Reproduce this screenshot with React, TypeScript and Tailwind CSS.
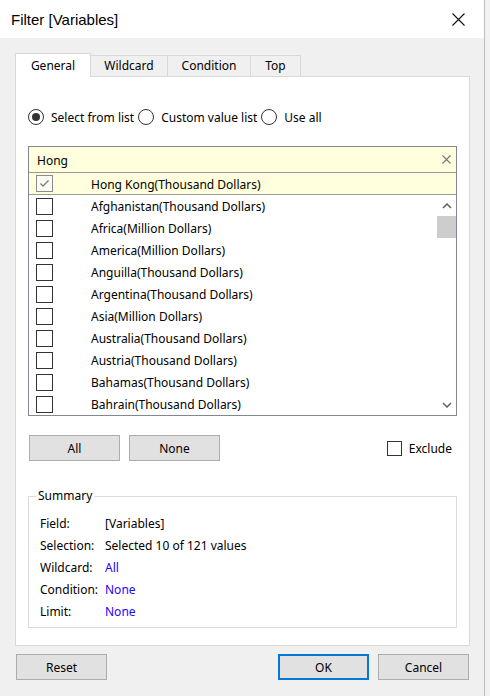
import React from "react";

const FONT = { fontFamily: '"Noto Sans", "Liberation Sans", Arial, sans-serif' };
const TITLE_FONT = { fontFamily: '"Liberation Sans", Arial, sans-serif' };

const items = [
  "Afghanistan(Thousand Dollars)",
  "Africa(Million Dollars)",
  "America(Million Dollars)",
  "Anguilla(Thousand Dollars)",
  "Argentina(Thousand Dollars)",
  "Asia(Million Dollars)",
  "Australia(Thousand Dollars)",
  "Austria(Thousand Dollars)",
  "Bahamas(Thousand Dollars)",
  "Bahrain(Thousand Dollars)",
];

function Radio({ checked, label }: { checked?: boolean; label: string }) {
  return (
    <div className="flex items-center">
      <div className="w-[16px] h-[16px] rounded-full border border-[#333] bg-white flex items-center justify-center">
        {checked && <div className="w-[8px] h-[8px] rounded-full bg-[#333]" />}
      </div>
      <span className="ml-[7px] pt-[2px]">{label}</span>
    </div>
  );
}

function Btn({ label, primary, className = "" }: { label: string; primary?: boolean; className?: string }) {
  return (
    <div
      className={
        "h-[26px] w-[91px] flex items-center justify-center bg-[#e1e1e1] text-black " +
        (primary ? "border-2 border-[#0078d7] " : "border border-[#adadad] ") +
        className
      }
    >
      <span className="pt-[2px]">{label}</span>
    </div>
  );
}

function Tab({ label, active, w }: { label: string; active?: boolean; w: string }) {
  return (
    <div
      className={
        "flex items-center justify-center border border-b-0 border-[#d9d9d9] " +
        w +
        (active ? " h-[24px] bg-white relative z-10 -mb-px" : " h-[21px] bg-[#f0f0f0] -ml-px")
      }
    >
      {label}
    </div>
  );
}

export default function App() {
  return (
    <div className="w-[490px] h-[696px] flex bg-[#f0f0f0] text-[12px] leading-[16px] text-black overflow-hidden" style={FONT}>
      <div className="w-[485px] h-[696px] flex flex-col bg-[#f0f0f0] border-r border-[#bcbcbc]">
        {/* Title bar */}
        <div className="h-[38px] bg-white flex items-center justify-between pl-[11px] pr-[19px] shrink-0">
          <span className="text-[15px] leading-none" style={TITLE_FONT}>Filter [Variables]</span>
          <svg width="13" height="13" viewBox="0 0 13 13">
            <path d="M0.5 0.5 L12.5 12.5 M12.5 0.5 L0.5 12.5" stroke="#111" strokeWidth="1.1" />
          </svg>
        </div>

        <div className="flex flex-col px-[15px] pt-[14px]">
          {/* Tabs */}
          <div className="flex items-end h-[24px]">
            <Tab label="General" active w="w-[76px]" />
            <Tab label="Wildcard" w="w-[78px]" />
            <Tab label="Condition" w="w-[84px]" />
            <Tab label="Top" w="w-[51px]" />
          </div>

          {/* Panel */}
          <div className="w-[455px] h-[570px] bg-white border border-[#d9d9d9] pl-[12px] flex flex-col">
            <div className="flex items-center gap-[4px] mt-[31px] h-[17px]">
              <Radio checked label="Select from list" />
              <Radio label="Custom value list" />
              <Radio label="Use all" />
            </div>

            {/* list box */}
            <div className="mt-[21px] w-[429px] border border-[#828790] flex flex-col">
              <div className="h-[26px] bg-[#ffffdd] flex items-center justify-between pl-[8px] pr-[5px] border-b border-[#9a9a9a]">
                <span className="pt-[2px]">Hong</span>
                <svg width="9" height="9" viewBox="0 0 9 9">
                  <path d="M0.5 0.5 L8.5 8.5 M8.5 0.5 L0.5 8.5" stroke="#777" strokeWidth="1.1" />
                </svg>
              </div>
              <div className="h-[22px] bg-[#ffffdd] flex items-center pl-[7px] border-b border-[#9a9a9a]">
                <div className="w-[17px] h-[17px] border border-[#8c8c8c] bg-[#fbfbf4] flex items-center justify-center">
                  <svg width="11" height="9" viewBox="0 0 11 9">
                    <path d="M1.5 4.5 L4 7 L9.5 1.5" fill="none" stroke="#7a7a7a" strokeWidth="1.3" />
                  </svg>
                </div>
                <span className="ml-[38px] pt-[2px]">Hong Kong(Thousand Dollars)</span>
              </div>
              <div className="h-[220px] flex">
                <div className="flex-1 flex flex-col">
                  {items.map((it) => (
                    <div key={it} className="h-[22px] flex items-center pl-[7px]">
                      <div className="w-[17px] h-[17px] border border-[#333] bg-white" />
                      <span className="ml-[38px] pt-[2px]">{it}</span>
                    </div>
                  ))}
                </div>
                <div className="w-[19px] flex flex-col items-center bg-white">
                  <div className="h-[21px] flex items-center justify-center">
                    <svg width="10" height="6" viewBox="0 0 10 6">
                      <path d="M1 5 L5 1 L9 5" fill="none" stroke="#606060" strokeWidth="1.5" />
                    </svg>
                  </div>
                  <div className="w-[19px] h-[22px] bg-[#cdcdcd]" />
                  <div className="flex-1" />
                  <div className="h-[21px] flex items-center justify-center">
                    <svg width="10" height="6" viewBox="0 0 10 6">
                      <path d="M1 1 L5 5 L9 1" fill="none" stroke="#606060" strokeWidth="1.5" />
                    </svg>
                  </div>
                </div>
              </div>
            </div>

            {/* All/None + Exclude */}
            <div className="mt-[19px] flex items-center h-[26px] pl-[1px] pr-[17px]">
              <Btn label="All" />
              <Btn label="None" className="ml-[9px]" />
              <div className="ml-auto flex items-center">
                <div className="w-[15px] h-[15px] border border-[#333] bg-white" />
                <span className="ml-[7px] pt-[2px]">Exclude</span>
              </div>
            </div>

            {/* Summary */}
            <fieldset className="mt-[27px] w-[429px] border border-[#dcdcdc] pl-[11px] pt-[8px] pb-[5px]">
              <legend className="-ml-[4px] px-[2px] leading-[16px]">Summary</legend>
              {[
                ["Field:", "[Variables]", false],
                ["Selection:", "Selected 10 of 121 values", false],
                ["Wildcard:", "All", true],
                ["Condition:", "None", true],
                ["Limit:", "None", true],
              ].map(([k, v, blue]) => (
                <div key={k as string} className="h-[22px] flex items-center">
                  <span className="w-[65px] pt-[2px]">{k}</span>
                  <span className={"pt-[2px] " + (blue ? "text-[#2a00ff]" : "")}>{v}</span>
                </div>
              ))}
            </fieldset>
          </div>

          {/* Bottom buttons */}
          <div className="mt-[8px] flex items-center">
            <Btn label="Reset" className="ml-[1px]" />
            <Btn label="OK" primary className="ml-auto" />
            <Btn label="Cancel" className="ml-[9px]" />
          </div>
        </div>
      </div>
      <div className="flex-1 bg-[#f2f2f2]" />
    </div>
  );
}
